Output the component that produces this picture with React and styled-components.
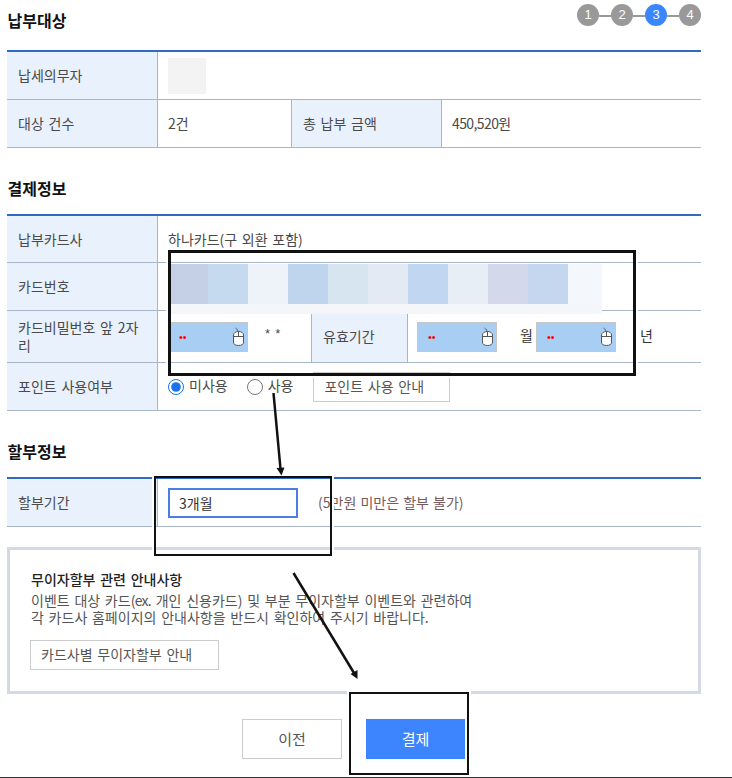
import styled, { createGlobalStyle } from "styled-components";

const GlobalStyle = createGlobalStyle`
  html, body {
    margin: 0;
    padding: 0;
    background: #fff;
    font-family: "Noto Sans CJK KR", "Noto Sans", sans-serif;
  }
  * {
    box-sizing: border-box;
  }
`;

const Page = styled.div`
  position: relative;
  width: 732px;
  height: 778px;
  padding: 0 31px 0 7px;
  overflow: hidden;
  border-bottom: 1px solid #333;
  color: #4a4a4a;
  font-size: 14px;
  line-height: 18px;
  word-spacing: 1.6px;
`;

const SectionHead = styled.div`
  display: flex;
  justify-content: space-between;
  align-items: flex-end;
  height: ${(props) => props.$height}px;
  padding-bottom: ${(props) => props.$bottom}px;
`;

const Heading = styled.h2`
  margin: 0 0 0 0.5px;
  font-size: 16px;
  line-height: 24px;
  font-weight: 700;
  color: #111;
`;

const Steps = styled.ol`
  display: flex;
  align-items: center;
  gap: 12px;
  margin: 0 0 6px;
  padding: 0;
  list-style: none;
`;

const Step = styled.li`
  position: relative;
  width: 22px;
  height: 22px;
  border-radius: 50%;
  background: ${(props) => (props.$active ? "#3a86ff" : "#999")};
  color: #fff;
  font-family: "Liberation Sans", sans-serif;
  font-size: 13px;
  line-height: 22px;
  text-align: center;

  &:not(:last-child)::after {
    content: "";
    position: absolute;
    top: 11px;
    left: 22px;
    width: 12px;
    height: 2px;
    background: #999;
  }
`;

const Table = styled.div`
  border-top: 2px solid #2f6bbf;
`;

const Row = styled.div`
  display: flex;
  height: ${(props) => props.$height || 48}px;
  border-bottom: 1px solid #a9b6c9;
`;

const Label = styled.div`
  display: flex;
  align-items: center;
  flex: none;
  width: ${(props) => (props.$width ? props.$width : 151)}px;
  padding: 0 10px ${(props) => props.$lift ?? 2}px 11px;
  background: #e9f1fd;
  border-right: 1px solid #a9b6c9;
  border-left: ${(props) => (props.$mid ? "1px solid #a9b6c9" : "0")};
  word-break: break-all;
`;

const Value = styled.div`
  display: flex;
  align-items: center;
  flex: ${(props) => (props.$width ? "none" : "1")};
  width: ${(props) => (props.$width ? `${props.$width}px` : "auto")};
  padding: 0 0 ${(props) => props.$lift ?? 2}px ${(props) => props.$left ?? 10}px;
  letter-spacing: ${(props) => (props.$tight ? "-0.6px" : "0")};
`;

const Placeholder = styled.div`
  width: 38px;
  height: 36px;
  background: #f3f3f3;
`;

const Blur = styled.div`
  position: relative;
  display: flex;
  flex-wrap: wrap;
  align-self: flex-start;
  flex: none;
  width: 431px;
  height: 50px;
  margin: 1px 0 0 3px;
  background: #f4f6f9;
`;

const Cell = styled.div`
  flex: none;
  width: ${(props) => props.$width}px;
  height: 40px;
  background: ${(props) => props.$color};
`;

const SecureInput = styled.div`
  display: flex;
  align-items: center;
  justify-content: space-between;
  flex: none;
  width: 80px;
  height: 30px;
  padding: 0 2px 0 10px;
  background: #a8cff3;
  border: 1px solid #c6c6c6;
`;

const Dots = styled.span`
  color: #f00;
  font-family: "Liberation Sans", sans-serif;
  font-size: 11px;
`;

const Stars = styled.span`
  margin: 0 0 5px 17px;
  font-family: "Liberation Sans", sans-serif;
  font-size: 13px;
`;

const Unit = styled.span`
  flex: none;
  width: ${(props) => props.$width}px;
  padding: 0 0 3px ${(props) => props.$left}px;
  color: #333;
`;

const RadioLabel = styled.label`
  display: flex;
  align-items: center;
  gap: 5px;
  margin-right: ${(props) => props.$gap}px;
`;

const RadioText = styled.span`
  padding-bottom: 3px;
`;

const Radio = styled.input`
  width: 16px;
  height: 16px;
  margin: 0;
  accent-color: #1a73e8;
`;

const GhostButton = styled.button`
  flex: none;
  width: ${(props) => props.$width}px;
  height: 30px;
  margin-left: ${(props) => props.$shift || 0}px;
  padding: 0 0 2px 10px;
  background: #fff;
  border: 1px solid #ccc;
  color: #555;
  font: inherit;
  word-spacing: inherit;
  text-align: left;
`;

const Select = styled.div`
  display: flex;
  align-items: center;
  flex: none;
  width: 130px;
  height: 30px;
  padding-left: 9px;
  border: 2px solid #4a7ee0;
  color: #333;
`;

const Hint = styled.span`
  margin: 0 0 2px 20px;
  color: #76595c;
  word-spacing: 1px;
`;

const Notice = styled.div`
  height: 147px;
  margin-top: 20px;
  padding: 20px 21px 0;
  border: 3px solid #d3dae6;
`;

const NoticeTitle = styled.h3`
  margin: 0 0 4px;
  font-size: 14px;
  line-height: 18px;
  font-weight: 500;
  color: #222;
`;

const NoticeText = styled.p`
  margin: 0 0 14px;
  line-height: 17px;
  color: #555;
`;

const Latin = styled.span`
  letter-spacing: -0.7px;
`;

const Actions = styled.div`
  display: flex;
  justify-content: center;
  gap: 24px;
  margin-top: 25px;
  padding-right: 1px;
`;

const ActionButton = styled.button`
  width: ${(props) => props.$width}px;
  height: 40px;
  background: ${(props) => (props.$primary ? "#3d85ff" : "#fff")};
  border: ${(props) => (props.$primary ? "0" : "1px solid #ccc")};
  color: ${(props) => (props.$primary ? "#fff" : "#555")};
  font: inherit;
  font-size: 15px;
`;

// marker boxes and arrows drawn on top of the capture
const Marker = styled.div`
  position: absolute;
  left: ${(props) => props.$x}px;
  top: ${(props) => props.$y}px;
  width: ${(props) => props.$w}px;
  height: ${(props) => props.$h}px;
  border: ${(props) => props.$line}px solid #111;
  box-shadow: 0 0 0 2px #fff;
`;

const ArrowLayer = styled.svg`
  position: absolute;
  top: 0;
  left: 0;
`;

const MouseIcon = () => (
  <svg width="13" height="20" viewBox="0 0 13 20">
    <path d="M6 5 C6 3 5 2 3.5 1" fill="none" stroke="#555" />
    <path
      d="M1.5 8 C1.5 6 3.5 4.5 6.5 4.5 C9.5 4.5 11.5 6 11.5 8 L11.5 15 C11.5 17.5 9.5 18.5 6.5 18.5 C3.5 18.5 1.5 17.5 1.5 15 Z"
      fill="#fff"
      stroke="#555"
    />
    <path d="M1.5 9.5 H11.5 M6.5 4.5 V9.5" fill="none" stroke="#555" />
  </svg>
);

const Secure = () => (
  <SecureInput>
    <Dots>••</Dots>
    <MouseIcon />
  </SecureInput>
);

const blurCells = [
  ["#c5cfe6", 37],
  ["#c5daef", 40],
  ["#eef3f9", 40],
  ["#bfd5ee", 40],
  ["#d7e5f1", 40],
  ["#e3eaf4", 40],
  ["#c1d6f0", 40],
  ["#e8eef6", 40],
  ["#d3d8eb", 40],
  ["#c4d7ef", 40],
  ["#f4f7fb", 34],
];

const App = () => {
  return (
    <>
      <GlobalStyle />
      <Page>
        <SectionHead $height={50} $bottom={18}>
          <Heading>납부대상</Heading>
          <Steps>
            {[1, 2, 3, 4].map((n) => (
              <Step key={n} $active={n === 3}>
                {n}
              </Step>
            ))}
          </Steps>
        </SectionHead>
        <Table>
          <Row>
            <Label>납세의무자</Label>
            <Value $lift={0}>
              <Placeholder />
            </Value>
          </Row>
          <Row>
            <Label>대상 건수</Label>
            <Value $width={133}>2건</Value>
            <Label $mid>총 납부 금액</Label>
            <Value $tight>450,520원</Value>
          </Row>
        </Table>

        <SectionHead $height={66} $bottom={14}>
          <Heading>결제정보</Heading>
        </SectionHead>
        <Table>
          <Row $height={47}>
            <Label $lift={0}>납부카드사</Label>
            <Value $lift={0}>하나카드(구 외환 포함)</Value>
          </Row>
          <Row>
            <Label>카드번호</Label>
            <Value $lift={0}>
              <Blur>
                {blurCells.map(([color, width]) => (
                  <Cell key={color} $color={color} $width={width} />
                ))}
              </Blur>
            </Value>
          </Row>
          <Row $height={52}>
            <Label>카드비밀번호 앞 2자리</Label>
            <Value $width={153} $lift={0}>
              <Secure />
              <Stars>* *</Stars>
            </Value>
            <Label $mid $width={97}>
              유효기간
            </Label>
            <Value $left={9} $lift={0}>
              <Secure />
              <Unit $width={39} $left={23}>
                월
              </Unit>
              <Secure />
              <Unit $width={30} $left={24}>
                년
              </Unit>
            </Value>
          </Row>
          <Row>
            <Label>포인트 사용여부</Label>
            <Value $lift={0}>
              <RadioLabel $gap={19}>
                <Radio type="radio" name="point" defaultChecked />
                <RadioText>미사용</RadioText>
              </RadioLabel>
              <RadioLabel $gap={20}>
                <Radio type="radio" name="point" />
                <RadioText>사용</RadioText>
              </RadioLabel>
              <GhostButton $width={137}>포인트 사용 안내</GhostButton>
            </Value>
          </Row>
        </Table>

        <SectionHead $height={66} $bottom={14}>
          <Heading>할부정보</Heading>
        </SectionHead>
        <Table>
          <Row>
            <Label>할부기간</Label>
            <Value $lift={0}>
              <Select>3개월</Select>
              <Hint>(5만원 미만은 할부 불가)</Hint>
            </Value>
          </Row>
        </Table>

        <Notice>
          <NoticeTitle>무이자할부 관련 안내사항</NoticeTitle>
          <NoticeText>
            이벤트 대상 카드<Latin>(ex.</Latin> 개인 신용카드) 및 부분 무이자할부 이벤트와 관련하여
            <br />각 카드사 홈페이지의 안내사항을 반드시 확인하여 주시기 바랍니다.
          </NoticeText>
          <GhostButton $width={189} $shift={-1}>
            카드사별 무이자할부 안내
          </GhostButton>
        </Notice>

        <Actions>
          <ActionButton $width={100}>이전</ActionButton>
          <ActionButton $width={99} $primary>
            결제
          </ActionButton>
        </Actions>

        <Marker $x={168} $y={250} $w={468} $h={126} $line={3} />
        <Marker $x={154} $y={476} $w={178} $h={80} $line={2} />
        <Marker $x={349} $y={692} $w={120} $h={83} $line={2} />
        <ArrowLayer width="732" height="778" viewBox="0 0 732 778">
          <path d="M273.5 393 L280.5 469" stroke="#111" strokeWidth="2.5" fill="none" />
          <path d="M276.5 468 L284.5 467.5 L281.5 475.5 Z" fill="#111" />
          <path d="M293.5 573 L354 673" stroke="#111" strokeWidth="2.5" fill="none" />
          <path d="M350.5 674 L357.5 670 L357.5 679 Z" fill="#111" />
        </ArrowLayer>
      </Page>
    </>
  );
};

export default App;
